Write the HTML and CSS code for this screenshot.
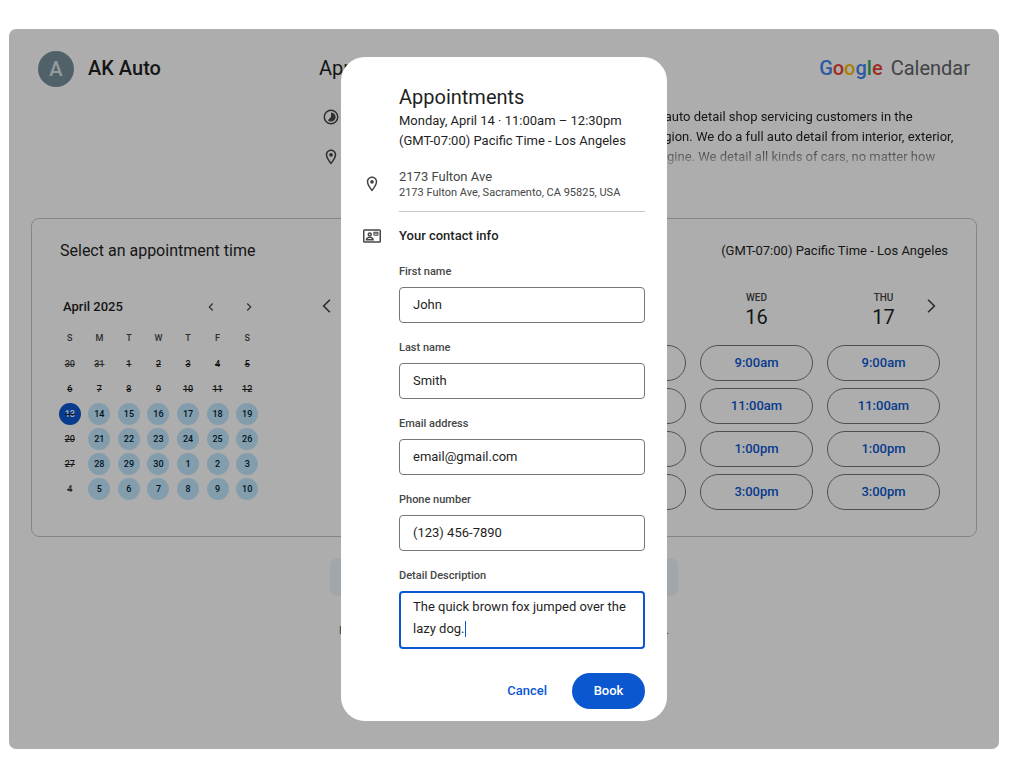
FILE: index.html
```html
<!DOCTYPE html>
<html lang="en">
<head>
<meta charset="utf-8">
<meta name="viewport" content="width=device-width, initial-scale=1">
<title>AK Auto - Appointments</title>
<link rel="stylesheet" href="styles.css">
</head>
<body>
<div class="page">
  <header class="header">
    <div class="owner"><span class="avatar">A</span><span class="owner-name">AK Auto</span></div>
    <h1 class="page-title">Appointments</h1>
    <div class="logo"><span class="google"><span class="g-blue">G</span><span class="g-red">o</span><span class="g-yellow">o</span><span class="g-blue">g</span><span class="g-green">l</span><span class="g-red">e</span></span><span>Calendar</span></div>
  </header>

  <section class="details">
    <div class="detail-icons">
      <svg class="icon" viewBox="0 0 24 24"><circle cx="12" cy="12" r="9" fill="none" stroke="currentColor" stroke-width="2"/><path fill="currentColor" d="M12 6v6l-4.2 4.2A6 6 0 1 0 12 6z"/></svg>
      <svg class="icon" viewBox="0 0 24 24"><path fill="currentColor" d="M12 2C8.14 2 5 5.14 5 9c0 5.25 7 13 7 13s7-7.75 7-13c0-3.86-3.14-7-7-7zm0 2c2.76 0 5 2.24 5 5 0 2.88-2.88 7.19-5 9.88C9.920 16.21 7 11.850 7 9c0-2.76 2.240-5 5-5z"/><circle cx="12" cy="9" r="2.5" fill="currentColor"/></svg>
    </div>
    <p class="description">– auto detail shop servicing customers in the<br>region. We do a full auto detail from interior, exterior,<br>engine. We detail all kinds of cars, no matter how</p>
  </section>

  <section class="schedule">
    <div class="schedule-head">
      <h2 class="schedule-title">Select an appointment time</h2>
      <span>(GMT-07:00) Pacific Time - Los Angeles</span>
    </div>
    <div class="schedule-body">
      <div class="month">
        <div class="month-head">
          <span class="month-name">April 2025</span>
          <button class="nav" aria-label="Previous month"><svg class="chevron-small" viewBox="0 0 24 24"><path d="M15 6l-6 6 6 6"/></svg></button>
          <button class="nav" aria-label="Next month"><svg class="chevron-small" viewBox="0 0 24 24"><path d="M9 6l6 6-6 6"/></svg></button>
        </div>
        <table class="dates">
          <thead><tr><th>S</th><th>M</th><th>T</th><th>W</th><th>T</th><th>F</th><th>S</th></tr></thead>
          <tbody>
            <tr><td class="past other">30</td><td class="past other">31</td><td class="past">1</td><td class="past">2</td><td class="past">3</td><td class="past">4</td><td class="past">5</td></tr>
            <tr><td class="past">6</td><td class="past">7</td><td class="past">8</td><td class="past">9</td><td class="past">10</td><td class="past">11</td><td class="past">12</td></tr>
            <tr><td class="past"><span class="date today">13</span></td><td><button class="date">14</button></td><td><button class="date">15</button></td><td><button class="date">16</button></td><td><button class="date">17</button></td><td><button class="date">18</button></td><td><button class="date">19</button></td></tr>
            <tr><td class="past">20</td><td><button class="date">21</button></td><td><button class="date">22</button></td><td><button class="date">23</button></td><td><button class="date">24</button></td><td><button class="date">25</button></td><td><button class="date">26</button></td></tr>
            <tr><td class="past">27</td><td><button class="date">28</button></td><td><button class="date">29</button></td><td><button class="date">30</button></td><td><button class="date">1</button></td><td><button class="date">2</button></td><td><button class="date">3</button></td></tr>
            <tr><td class="past other">4</td><td><button class="date">5</button></td><td><button class="date">6</button></td><td><button class="date">7</button></td><td><button class="date">8</button></td><td><button class="date">9</button></td><td><button class="date">10</button></td></tr>
          </tbody>
        </table>
      </div>
      <div class="week">
        <button class="nav week-prev" aria-label="Previous days"><svg class="chevron" viewBox="0 0 24 24"><path d="M15.500 4.500L8 12l7.500 7.500"/></svg></button>
        <div class="day"></div>
        <div class="day"><div class="day-name">MON</div><div class="day-number">14</div><button class="slot">9:00am</button><button class="slot">11:00am</button><button class="slot">1:00pm</button><button class="slot">3:00pm</button></div>
        <div class="day"><div class="day-name">TUE</div><div class="day-number">15</div><button class="slot">9:00am</button><button class="slot">11:00am</button><button class="slot">1:00pm</button><button class="slot">3:00pm</button></div>
        <div class="day"><div class="day-name">WED</div><div class="day-number">16</div><button class="slot">9:00am</button><button class="slot">11:00am</button><button class="slot">1:00pm</button><button class="slot">3:00pm</button></div>
        <div class="day"><div class="day-name">THU</div><div class="day-number">17</div><button class="slot">9:00am</button><button class="slot">11:00am</button><button class="slot">1:00pm</button><button class="slot">3:00pm</button></div>
        <button class="nav week-next" aria-label="Next days"><svg class="chevron" viewBox="0 0 24 24"><path d="M8.500 4.500L16 12l-7.500 7.500"/></svg></button>
      </div>
    </div>
  </section>
  <div class="notice"></div>
  <div class="footnote"><span>I</span><span>.</span></div>

  <div class="scrim">
    <form class="dialog" role="dialog" aria-labelledby="dialog-title">
      <div class="dialog-head">
        <h2 class="dialog-title" id="dialog-title">Appointments</h2>
        <p>Monday, April 14 · 11:00am – 12:30pm</p>
        <p>(GMT-07:00) Pacific Time - Los Angeles</p>
      </div>
      <svg class="icon place-icon" viewBox="0 0 24 24"><path fill="currentColor" d="M12 2C8.14 2 5 5.14 5 9c0 5.25 7 13 7 13s7-7.75 7-13c0-3.86-3.14-7-7-7zm0 2c2.76 0 5 2.24 5 5 0 2.88-2.88 7.19-5 9.88C9.920 16.21 7 11.850 7 9c0-2.76 2.240-5 5-5z"/><circle cx="12" cy="9" r="2.500" fill="currentColor"/></svg>
      <div class="place">
        <div class="place-name">2173 Fulton Ave</div>
        <div class="place-address">2173 Fulton Ave, Sacramento, CA 95825, USA</div>
      </div>
      <svg class="icon contact-icon" viewBox="0 0 24 24"><g fill="none" stroke="currentColor" stroke-width="2"><rect x="1" y="4" width="22" height="16" rx="1"/><circle cx="9" cy="10" r="2"/><path d="M4.500 17c0-4.200 9-4.200 9 0z" stroke-width="1.700"/><path d="M14.500 7h5.500v4h-5.500zM14.500 7.500l2.750 2 2.750-2" stroke-width="1.300"/></g></svg>
      <h3 class="contact-title">Your contact info</h3>
      <div class="fields">
        <div class="field"><label for="first">First name</label><input id="first" type="text" value="John"></div>
        <div class="field"><label for="last">Last name</label><input id="last" type="text" value="Smith"></div>
        <div class="field"><label for="email">Email address</label><input id="email" type="email" value="email@gmail.com"></div>
        <div class="field"><label for="phone">Phone number</label><input id="phone" type="tel" value="(123) 456-7890"></div>
        <div class="field"><label for="detail">Detail Description</label><div class="editor"><textarea id="detail" rows="2">The quick brown fox jumped over the lazy dog.</textarea><span class="caret"></span></div></div>
      </div>
      <div class="actions"><button class="cancel" type="button">Cancel</button><button class="book" type="submit">Book</button></div>
    </form>
  </div>
</div>
</body>
</html>
```
FILE: styles.css
```css
* { box-sizing: border-box; }

body {
  margin: 0;
  min-height: 100vh;
  padding: 29px 11px 24px 9px;
  display: flex;
  flex-direction: column;
  background: #fff;
  color: #1f1f1f;
  font: 13px/20px Roboto, "Liberation Sans", sans-serif;
}

h1, h2, h3, p { margin: 0; font-weight: 400; }
button, input, textarea { font: inherit; }
button { margin: 0; padding: 0; border: 0; background: none; color: inherit; }

.page {
  position: relative;
  flex: 1;
  padding: 22px;
  border-radius: 7px;
  overflow: hidden;
}

.header {
  display: grid;
  grid-template-columns: 281px 1fr auto;
  align-items: center;
  padding: 0 7px;
}
.owner { display: flex; align-items: center; gap: 14px; }
.avatar {
  width: 36px;
  height: 36px;
  border-radius: 50%;
  background: #78909c;
  color: #dce3e6;
  font-size: 20px;
  font-weight: 500;
  line-height: 36px;
  text-align: center;
}
.owner-name, .page-title, .logo { padding-bottom: 2px; font-size: 20px; line-height: 24px; }
.owner-name { font-weight: 500; }
.logo { display: flex; gap: 8px; color: #5f6368; }
.google { font-weight: 500; }
.g-blue { color: #4285f4; }
.g-red { color: #ea4335; }
.g-yellow { color: #fbbc04; }
.g-green { color: #34a853; }

.details {
  display: flex;
  gap: 313px;
  padding: 20px 0 0 291px;
}
.detail-icons { display: flex; flex-direction: column; gap: 22px; padding-top: 1px; }
.icon { display: block; width: 18px; height: 18px; color: #444746; }
.description {
  white-space: nowrap;
  mask-image: linear-gradient(#000 36px, transparent 64px);
}

.schedule {
  margin-top: 51px;
  padding: 20px 28px 26px;
  border: 1px solid #c4c7c5;
  border-radius: 8px;
}
.schedule-head { display: flex; justify-content: space-between; align-items: center; }
.schedule-title { font-size: 16px; line-height: 24px; }
.schedule-body { display: flex; gap: 57px; padding-top: 28px; }

.month { width: 207px; margin-left: -5px; padding-top: 4px; }
.month-head { display: flex; gap: 14px; height: 24px; align-items: center; padding-right: 1px; }
.month-name { flex: 1; padding-left: 8px; font-weight: 500; }
.nav { width: 24px; height: 24px; display: grid; place-items: center; color: #444746; }
.nav svg { fill: none; stroke: currentColor; stroke-width: 2; }
.chevron-small { width: 14px; height: 14px; }
.chevron { width: 20px; height: 20px; }
.dates {
  width: 100%;
  margin-top: 6px;
  border-collapse: collapse;
  table-layout: fixed;
  font-size: 9px;
  font-weight: 500;
  line-height: 22px;
  text-align: center;
}
.dates th { height: 26px; padding: 0; font-weight: 500; color: #444746; }
.dates td { height: 25px; padding: 0; }
.dates .past { text-decoration: line-through; }
.dates .other { color: #444746; }
.date {
  display: block;
  width: 22px;
  height: 22px;
  margin: 0 auto;
  border-radius: 50%;
  background: #c2e7ff;
  color: #001d35;
}
.date.today { background: #0b57d0; color: #fff; }

.week {
  position: relative;
  flex: 1;
  display: grid;
  grid-template-columns: repeat(5, 1fr);
  gap: 14px;
  margin-right: 8px;
}
.week-prev, .week-next { position: absolute; top: 3px; }
.week-prev { left: -4px; }
.week-next { right: -3px; }
.day { display: flex; flex-direction: column; gap: 7px; text-align: center; }
.day-name { font-size: 10px; font-weight: 500; line-height: 14px; color: #444746; }
.day-number { margin: -7px 0 9px; font-size: 20px; line-height: 24px; }
.slot {
  height: 36px;
  border: 1px solid #747775;
  border-radius: 18px;
  color: #0b57d0;
  font-weight: 500;
}

.notice {
  max-width: 348px;
  height: 38px;
  margin: 21px auto 0;
  border-radius: 8px;
  background: #edf5fb;
}
.footnote {
  display: flex;
  justify-content: space-between;
  max-width: 330px;
  margin: 27px auto 0;
  color: #444746;
  font-size: 10px;
  line-height: 16px;
}

.scrim {
  position: absolute;
  inset: 0;
  display: grid;
  place-items: center;
  background: rgba(0, 0, 0, 0.32);
}
.dialog {
  width: 326px;
  display: grid;
  grid-template-columns: 18px 1fr;
  column-gap: 18px;
  padding: 26px 22px 12px;
  border-radius: 24px;
  background: #fff;
}
.dialog-head, .fields, .actions { grid-column: 2; }
.dialog-title { font-size: 20px; line-height: 28px; }
.place-icon { margin-top: 24px; }
.place {
  margin-top: 18px;
  padding-bottom: 10px;
  border-bottom: 1px solid #c4c7c5;
  color: #444746;
  line-height: 16px;
}
.place-address { font-size: 11px; }
.contact-icon { margin-top: 15px; }
.contact-title { margin-top: 14px; font-size: 13px; font-weight: 500; }
.fields { display: grid; gap: 17px; margin-top: 18px; }
.field { display: grid; gap: 7px; }
.field label { color: #444746; font-size: 11px; font-weight: 500; line-height: 16px; }
.field input, .field textarea {
  display: block;
  width: 100%;
  height: 36px;
  margin: 0;
  padding: 0 13px 2px;
  border: 1px solid #747775;
  border-radius: 4px;
  color: #1f1f1f;
}
.editor { position: relative; }
.field textarea {
  height: 58px;
  padding: 3px 12px;
  border: 2px solid #0b57d0;
  outline: 0;
  caret-color: transparent;
  line-height: 22px;
  overflow: hidden;
  resize: none;
}
.caret {
  position: absolute;
  top: 30px;
  left: 66px;
  width: 1px;
  height: 16px;
  background: #0b57d0;
}
.actions { display: flex; justify-content: flex-end; gap: 4px; margin-top: 24px; font-weight: 500; }
.cancel, .book { height: 36px; padding: 0 21px; border-radius: 18px; }
.cancel { color: #0b57d0; }
.book { min-width: 73px; background: #0b57d0; color: #fff; }
```
